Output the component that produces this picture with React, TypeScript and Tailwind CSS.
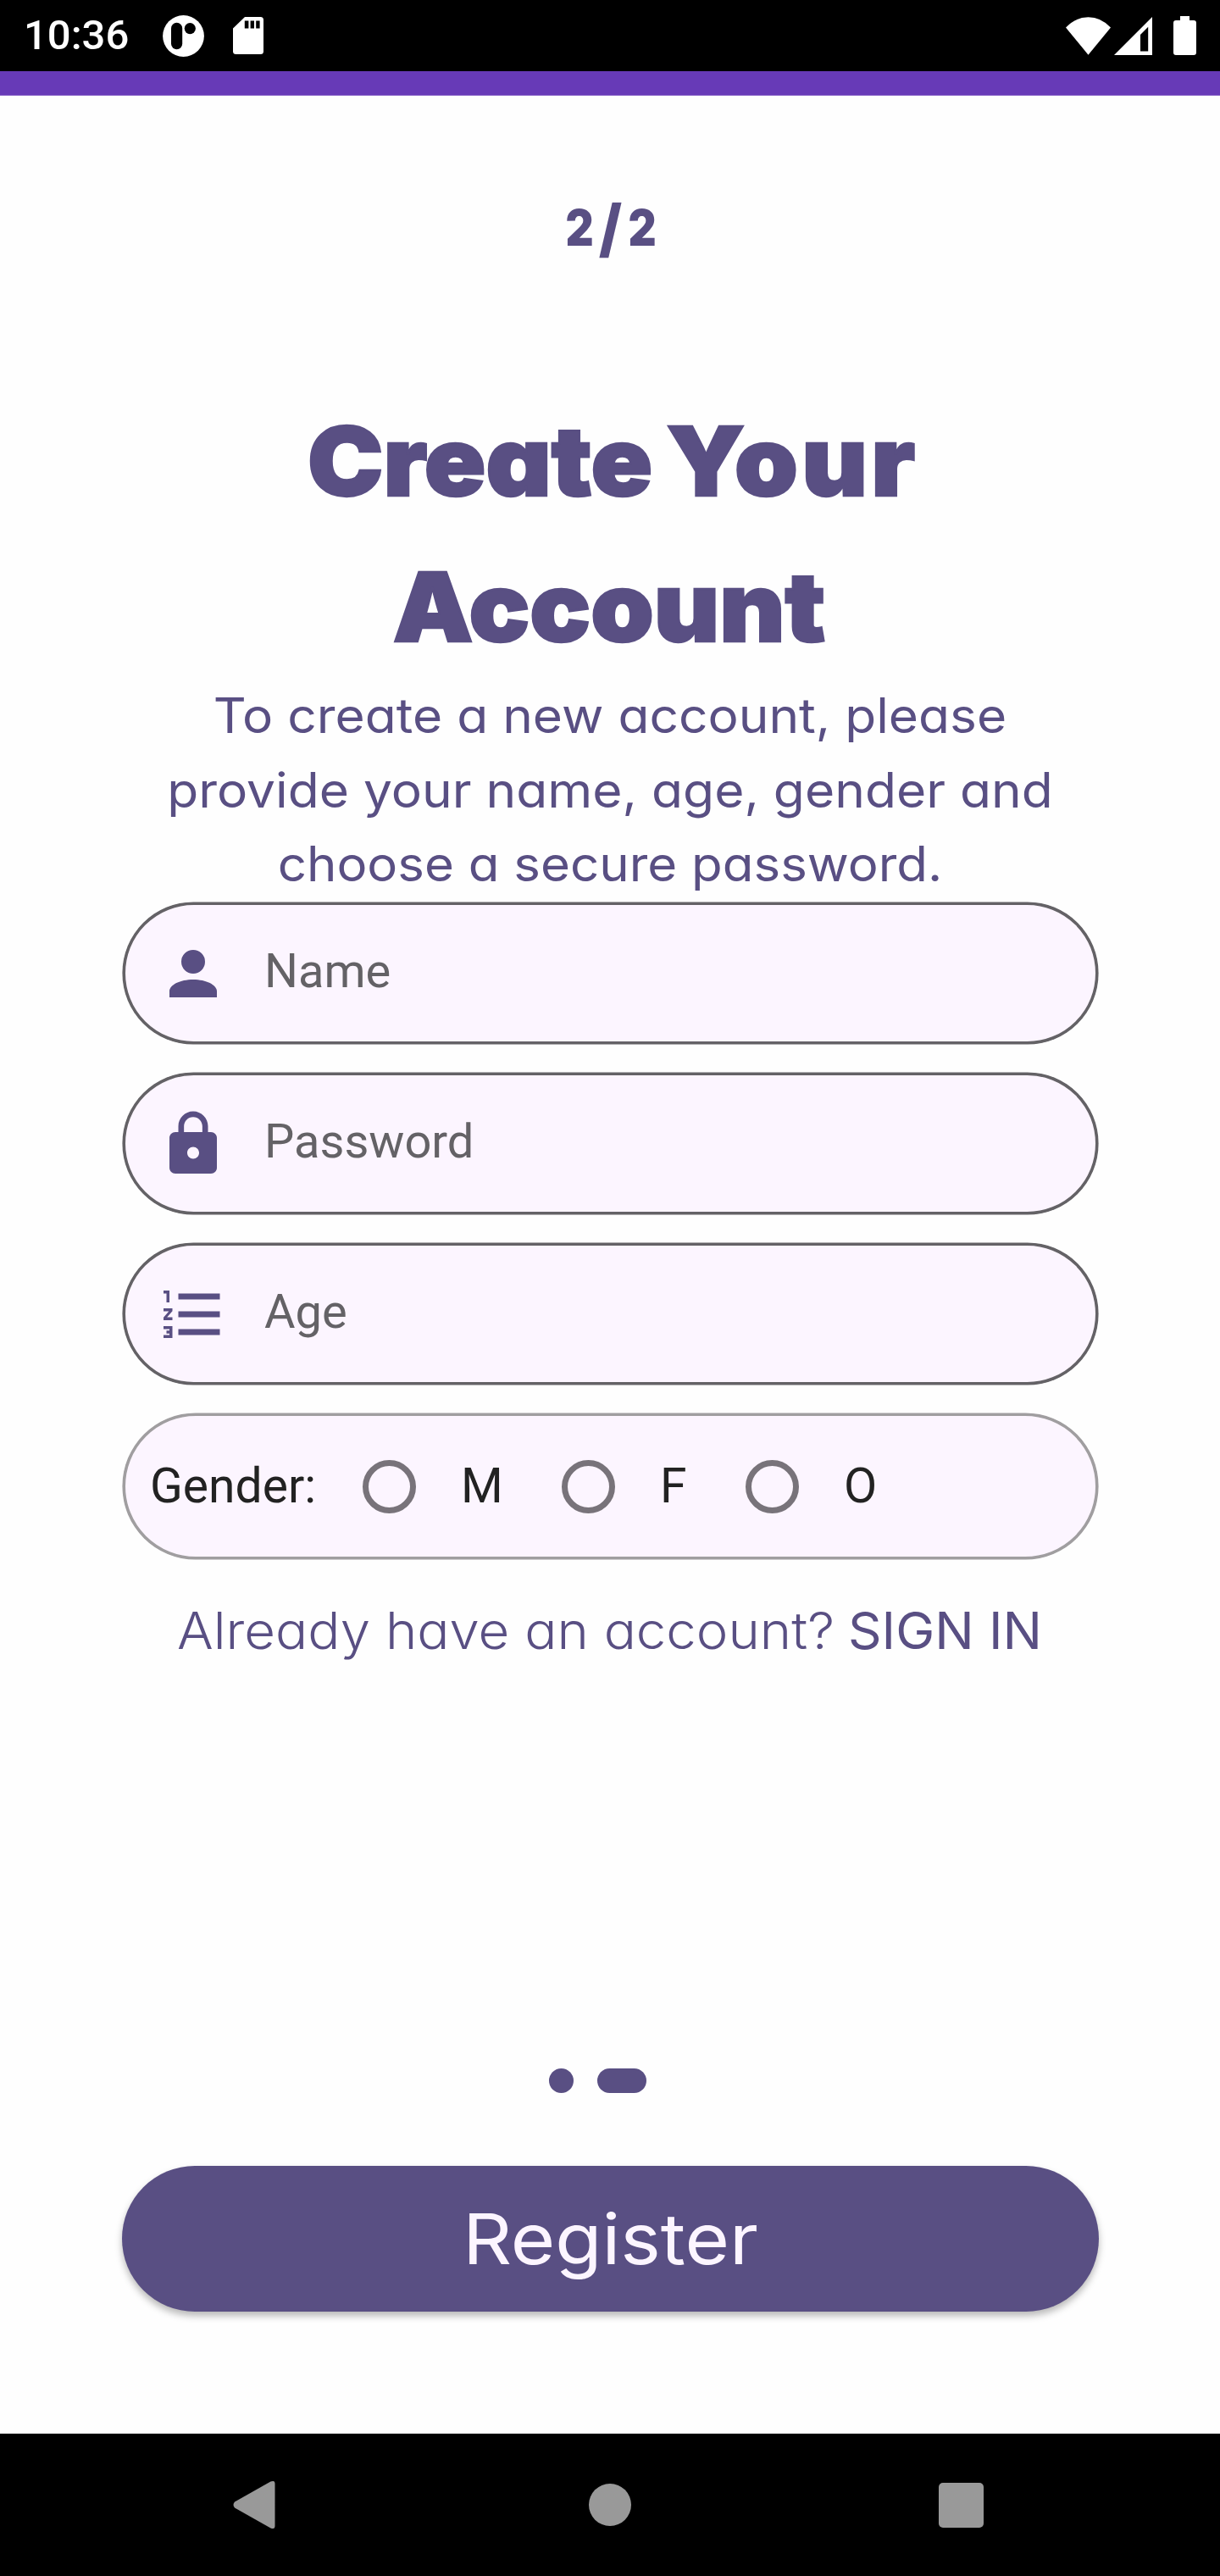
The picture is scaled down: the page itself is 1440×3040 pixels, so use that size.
import React from "react";

const PERSON = "M12 4a4 4 0 1 1 0 8 4 4 0 0 1 0-8m0 10c4.42 0 8 1.79 8 4v2H4v-2c0-2.21 3.58-4 8-4";
const LOCK =
  "M18 8h-1V6c0-2.76-2.24-5-5-5S7 3.24 7 6v2H6c-1.1 0-2 .9-2 2v10c0 1.1.9 2 2 2h12c1.1 0 2-.9 2-2V10c0-1.1-.9-2-2-2zm-6 9c-1.1 0-2-.9-2-2s.9-2 2-2 2 .9 2 2-.9 2-2 2zm3.1-9H8.9V6c0-1.71 1.39-3.1 3.1-3.1s3.1 1.39 3.1 3.1v2z";
const NUMBERS =
  "M2 17h2v.5H3v1h1v.5H2v1h3v-4H2v1zm1-9h1V4H2v1h1v3zm-1 3h1.8L2 13.1v.9h3v-1H3.2L5 10.9V10H2v1zm5-6v2h14V5H7zm0 14h14v-2H7v2zm0-6h14v-2H7v2z";

const fields = [
  { label: "Name", icon: PERSON },
  { label: "Password", icon: LOCK },
  { label: "Age", icon: NUMBERS },
];

function StatusBar() {
  return (
    <header className="flex h-[84px] items-center bg-black">
      <span className="w-[192px] pb-px pl-[28px] font-['Roboto',sans-serif] text-[49px] leading-[60px] font-medium text-white">
        10:36
      </span>
      <svg className="h-[49px] w-[49px]" viewBox="0 0 49 49">
        <circle cx="24.5" cy="24.5" r="24.4" fill="#fff" />
        <rect x="10" y="8.8" width="13.2" height="31.4" rx="6.6" />
        <circle cx="32.3" cy="15.6" r="6.6" />
      </svg>
      <svg className="ml-[34px] h-[44px] w-[36px]" viewBox="0 0 36 44">
        <path d="M14 0H32.5Q36 0 36 3.5V40.5Q36 44 32.5 44H3.5Q0 44 0 40.5V13.5Z" fill="#fff" />
        <path d="M13.8 4.5h4.6v9h-4.6zM20.6 4.5h4.4v9h-4.4zM27.2 4.5h4.4v9h-4.4z" />
      </svg>
      <div className="ml-auto flex items-center pr-[28px]">
        <svg className="h-[45px] w-[53px]" viewBox="0 0 53 45">
          <path d="M26.5 44.7 0 12.5Q11.5 .3 26.5 .3T53 12.5Z" fill="#fff" />
        </svg>
        <svg className="ml-[4px] h-[45px] w-[45px]" viewBox="0 0 45 45">
          <path d="M45 0V45H0ZM40.2 11.8 31 21V40.6H40.2Z" fill="#fff" fillRule="evenodd" />
        </svg>
        <svg className="ml-[25px] h-[46px] w-[27px]" viewBox="0 0 27 46">
          <path d="M8 0H19V5H24Q27 5 27 8V43Q27 46 24 46H3Q0 46 0 43V8Q0 5 3 5H8Z" fill="#fff" />
        </svg>
      </div>
    </header>
  );
}

function Field({ label, icon }: { label: string; icon: string }) {
  return (
    <div className="flex h-[167px] items-center gap-[42px] rounded-full border-[3px] border-[#646266] bg-[#fcf5ff] pl-[38px] shadow-[0_0_0_0.6px_#646266]">
      <svg className="h-[84px] w-[84px]" viewBox="0 0 24 24" fill="#594f83">
        <path d={icon} />
      </svg>
      <span className="pb-[6px] text-[56px] leading-[80px] text-[#646266]">{label}</span>
    </div>
  );
}

function Radio() {
  return <span className="h-[63px] w-[63px] shrink-0 rounded-full border-[7px] border-[#78737a]" />;
}

export default function App() {
  return (
    <div className="flex h-[3040px] w-[1440px] flex-col overflow-hidden bg-[#fefefe] font-['Inter',sans-serif] text-[#594f83] [font-feature-settings:'cv11'_1]">
      <StatusBar />
      <div className="h-[29px] shrink-0 border-b border-[#8a66c8] bg-[#673ab7]" />

      <p className="mt-[111px] flex justify-center text-center text-[59px] leading-[90px] font-black">
        <span className="w-[37px] scale-x-[0.87]">2</span>
        <span className="flex w-[37px] scale-x-[0.87] justify-center text-[75px]">/</span>
        <span className="w-[37px] scale-x-[0.87]">2</span>
      </p>

      <h1 className="mt-[144px] text-center text-[113px] leading-[172px] font-black whitespace-nowrap [-webkit-text-stroke:2.5px_#594f83]">
        <span className="block scale-x-[1.06] pl-[7px] [word-spacing:-7px]">
          Create <span className="tracking-[4px]">Your</span>
        </span>
        <span className="block scale-x-[1.055] pr-[2px]">Account</span>
      </h1>

      <p className="-mt-px h-[264px] text-center text-[57px] leading-[87.5px] whitespace-nowrap">
        <span className="block scale-x-[1.06]">To create a new account, please</span>
        <span className="block scale-x-[1.061]">provide your name, age, gender and</span>
        <span className="block scale-x-[1.052]">choose a secure password.</span>
      </p>

      <form className="mx-[145px] flex w-[1151px] flex-col gap-[34px] font-['Roboto',sans-serif]">
        {fields.map((f) => (
          <Field key={f.label} {...f} />
        ))}
        <div className="flex h-[172px] items-center rounded-full border-[3px] border-[#a09ea0] bg-[#fcf5ff] pl-[29px] text-[57px] leading-[80px] text-[#222] shadow-[0_0_0_0.6px_#a09ea0]">
          <span className="w-[251px]">Gender:</span>
          <Radio />
          <span className="ml-[53px] w-[119px]">M</span>
          <Radio />
          <span className="ml-[53px] w-[101px]">F</span>
          <Radio />
          <span className="ml-[53px]">O</span>
        </div>
      </form>

      <p className="mt-[44px] flex h-[80px] pl-[209px] text-[60px] leading-[80px] whitespace-nowrap">
        <span className="w-[792px] origin-left scale-x-[1.058] font-light">Already have an account?</span>
        <span className="origin-left scale-x-[1.028]">SIGN IN</span>
      </p>

      <div className="mt-[477px] flex gap-[28px] pl-[648px]">
        <span className="h-[29px] w-[29px] rounded-full bg-[#594f83]" />
        <span className="h-[29px] w-[58px] rounded-full bg-[#594f83]" />
      </div>

      <button className="mx-[144px] mt-[86px] h-[172px] w-[1153px] rounded-full bg-[#594f83] text-center text-[83px] leading-[172px] text-[#fcf5ff] shadow-[0_5px_8px_rgba(0,0,0,0.28)]">
        <span className="block scale-x-[1.085]">Register</span>
      </button>

      <nav className="mt-auto flex h-[168px] items-center bg-black">
        <svg className="ml-[275px] h-[58px] w-[50px]" viewBox="0 0 50 58">
          <path d="M2 25.5 44.5 1.6Q49.5 -.5 49.5 4V54Q49.5 58.5 44.5 56.4L2 32.5Q-1 29 2 25.5Z" fill="#999" />
        </svg>
        <span className="ml-[370px] h-[50px] w-[50px] rounded-full bg-[#999]" />
        <span className="ml-[363px] h-[53px] w-[53px] rounded-[5px] bg-[#999]" />
      </nav>
    </div>
  );
}
